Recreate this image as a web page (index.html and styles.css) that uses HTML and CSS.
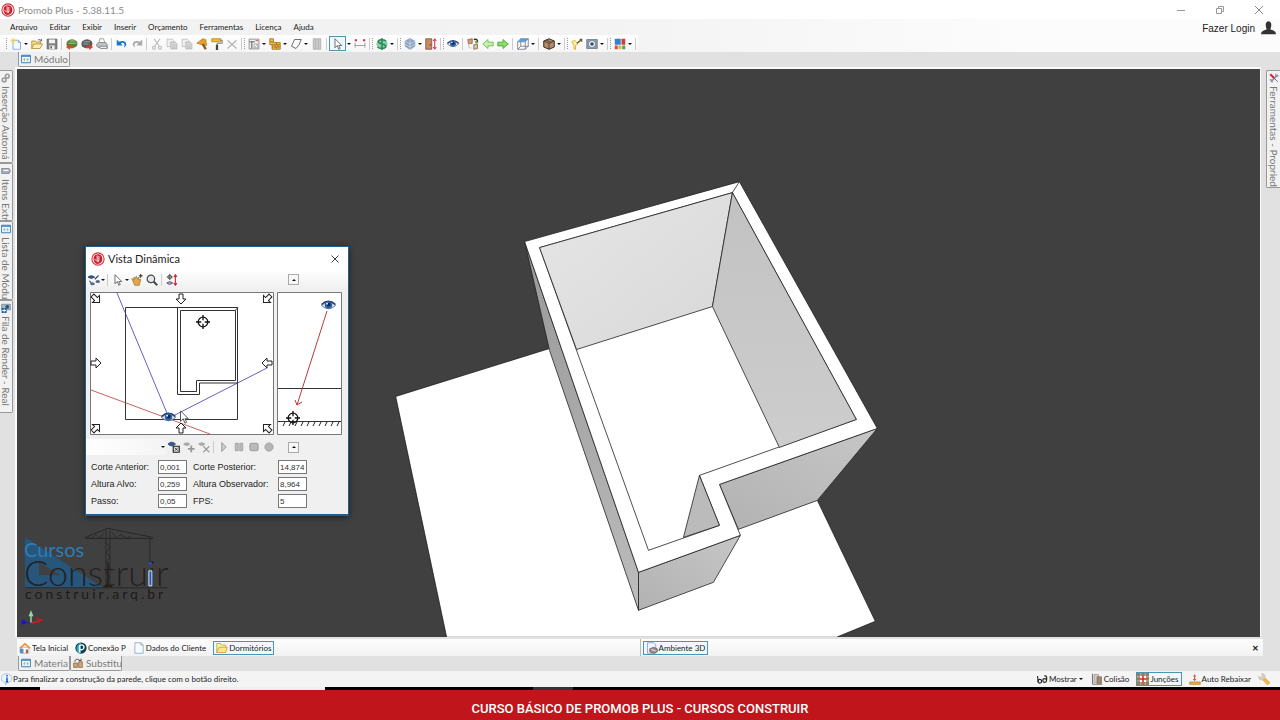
FILE: index.html
```html
<!DOCTYPE html>
<html lang="pt-BR">
<head>
<meta charset="utf-8">
<title>Promob Plus</title>
<link rel="stylesheet" href="styles.css">
</head>
<body>
<svg class="defs" aria-hidden="true">
  <symbol id="logo" viewBox="0 0 16 16"><circle cx="8" cy="8" r="7" fill="#fff" stroke="#d3303a" stroke-width="1.2"/><path d="M8 2.500C4 2.500 2.500 6 3 9s3 5 5 4.500c2.500 0 5-2 5-5.500 0-3.500-2-5.500-5-5.500z" fill="#cf1f2b"/><path d="M7 4v5l2 1V4.500M4 8q2 3 5 3" fill="none" stroke="#fff" stroke-width="1"/></symbol>
  <symbol id="new" viewBox="0 0 16 16"><path d="M4 3h7l3 3v9H4z" fill="#f5faff" stroke="#6c9bd0"/><path d="M11 3v3h3" fill="none" stroke="#6c9bd0"/><path d="M4 0v7M.5 3.500h7M1.500 1l5 5M6.500 1l-5 5" stroke="#f2cf4a"/></symbol>
  <symbol id="open" viewBox="0 0 16 16"><path d="M1 14V4h5l1 1.500h6V8" fill="#f6dc8b" stroke="#a98325"/><path d="M1 14L4 8h11.500L12 14z" fill="#fff0b0" stroke="#a98325"/><path d="M9 3c2-2 4-1 5 1m0-3v3h-3" fill="none" stroke="#555"/></symbol>
  <symbol id="save" viewBox="0 0 16 16"><path d="M1.500 1.500h13v13h-13z" fill="#858585" stroke="#555"/><path d="M4 2h8v5H4zM4.500 10h7v4.500h-7z" fill="#f2f2f2"/><path d="M6 11h2v3H6z" fill="#555"/></symbol>
  <symbol id="imp" viewBox="0 0 16 16"><path d="M2 4q6-5 12 0 3 5-1 8-6 3-11 0-3-4 0-8z" fill="#51803c"/><path d="M3 7h11M5 4h7" stroke="#a6c97b" stroke-width="1.500"/><path d="M0 12l5-4v2.500h5v3H5V16z" fill="#d94926"/></symbol>
  <symbol id="exp" viewBox="0 0 16 16"><path d="M2 4q6-5 12 0 3 5-1 8-6 3-11 0-3-4 0-8z" fill="#5c5c5c"/><path d="M4 5h8M3 8h7" stroke="#a2a2a2" stroke-width="1.500"/><path d="M16 12l-5-4v2.500H7v3h4V16z" fill="#d13e2b"/></symbol>
  <symbol id="print" viewBox="0 0 16 16"><path d="M4 7l1-6h5l2 6" fill="#fff" stroke="#888"/><path d="M1 8l3-2h9l2 3v4H4l-3-2z" fill="#bfc3ca" stroke="#777"/><path d="M4 11h10l1 3H6z" fill="#e8edf2" stroke="#777"/></symbol>
  <symbol id="undo" viewBox="0 0 16 16"><path d="M1 2v8h8L6.500 7.500C9 5 13 7 10.500 13 17 9 13 1 4 5z" fill="#1878c9"/></symbol>
  <symbol id="redo" viewBox="0 0 16 16"><path d="M15 2v8H7l2.500-2.500C7 5 3 7 5.500 13-1 9 3 1 12 5z" fill="#aaa"/></symbol>
  <symbol id="cut" viewBox="0 0 16 16"><path d="M4 1l7 10M12 1L5 11" stroke="#bbb" stroke-width="1.500"/><g fill="none" stroke="#bbb" stroke-width="1.500"><circle cx="4" cy="13" r="2"/><circle cx="12" cy="13" r="2"/></g></symbol>
  <symbol id="copy" viewBox="0 0 16 16"><path d="M1.500 1.500h7l2 2v8h-9z" fill="#eee" stroke="#bbb"/><path d="M6.500 5.500h6l2 2v7h-8z" fill="#ddd" stroke="#aaa"/><path d="M8 9h5M8 11h5M8 13h5" stroke="#bbb"/></symbol>
  <symbol id="brush" viewBox="0 0 16 16"><path d="M1 7l8-6 4 1 1 8-5-1z" fill="#e4a12f" stroke="#b97913"/><path d="M9 8l4 7" stroke="#7d5923" stroke-width="3"/></symbol>
  <symbol id="roll" viewBox="0 0 16 16"><path d="M1 1h12v4H1z" fill="#f0c032" stroke="#a77a15"/><path d="M13 3h2v4H8v3" fill="none" stroke="#555"/><path d="M6.500 9h3v7h-3z" fill="#444"/></symbol>
  <symbol id="del" viewBox="0 0 16 16"><path d="M2 3l12 11M14 3L2 14" stroke="#b8b8b8" stroke-width="1.700"/></symbol>
  <symbol id="plan" viewBox="0 0 16 16"><path d="M1.500 1.500h13v13h-13z" fill="#f2f2f2" stroke="#777"/><path d="M2 5h7M5 5v9" stroke="#888" stroke-width="2"/><path d="M8 8h5v5H8zM8 13l5-5" fill="#fff" stroke="#999"/><path d="M10 3.500h4" stroke="#d66" stroke-width="1.500"/></symbol>
  <symbol id="bricks" viewBox="0 0 16 16"><path d="M1 1h5v5h9v9H4V9H1z" fill="#edb847" stroke="#9a6c20"/><path d="M1 5h5M4 9h11M4 12h11M10 6v3M8 9v3M12 9v3M10 12v3" stroke="#9a6c20"/></symbol>
  <symbol id="poly" viewBox="0 0 16 16"><path d="M6 2h9l-3 7-4 5-6-3z" fill="#fafafa" stroke="#444"/></symbol>
  <symbol id="book" viewBox="0 0 16 16"><path d="M3 1h10v14H3z" fill="#c9c9c9" stroke="#aaa"/><path d="M6 1v14M10 1v14" stroke="#b1b1b1"/></symbol>
  <symbol id="cursor" viewBox="0 0 16 16"><path d="M4 1v12l3-3 2 5 2-1-2-4h4z" fill="#fff" stroke="#444"/></symbol>
  <symbol id="measure" viewBox="0 0 16 16"><path d="M1.500 6v7M14.500 6v7M1 10h14" stroke="#888"/><path d="M1 3h3M12 3h3" stroke="#b33a51" stroke-width="2.500"/></symbol>
  <symbol id="money" viewBox="0 0 16 16"><ellipse cx="8" cy="8" rx="7.500" ry="6.500" fill="#8ccba5"/><path d="M13.500 4C9 1 3 2 3 5s10 2.500 10 6-8 4-11 1M8 0v16" fill="none" stroke="#258a57" stroke-width="2"/></symbol>
  <symbol id="layers" viewBox="0 0 16 16"><path d="M8 0l7 4v7l-7 5-7-5V4z" fill="#8aa3c2"/><path d="M1 4l7 4 7-4M1 8l7 4 7-4M8 1v15" fill="none" stroke="#d4dfec"/></symbol>
  <symbol id="door" viewBox="0 0 16 16"><path d="M1 1h8v14H1z" fill="#c48a65" stroke="#754a34"/><path d="M7 8v2" stroke="#422"/><path d="M13 2v12M11 4l2-3 2 3M11 12l2 3 2-3" fill="none" stroke="#d11c42" stroke-width="1.300"/></symbol>
  <symbol id="eye" viewBox="0 0 16 16"><path d="M.5 8Q8 .5 15.500 8 8 15 .5 8z" fill="#dce6f3" stroke="#6a7890"/><path d="M.5 7Q8 0 15.500 7" fill="none" stroke="#253b67" stroke-width="1.500"/><circle cx="8" cy="7.500" r="4" fill="#2b63ae"/><circle cx="8" cy="7" r="2" fill="#13274d"/><circle cx="6.500" cy="6" r="1" fill="#fff"/></symbol>
  <symbol id="swap" viewBox="0 0 16 16"><path d="M1 2l6-1v6L2 8z" fill="#d49a72" stroke="#876042"/><path d="M9 9l5-1v6l-5 1z" fill="#d8c0a0" stroke="#876042"/><path d="M9 2c4-1 5 0 5 4" fill="none" stroke="#333" stroke-width="2"/><path d="M6 13c-3 1-4-1-4-4" fill="none" stroke="#ccc" stroke-width="1.500"/><path d="M10 4l5 1-3 3z" fill="#64a24b"/></symbol>
  <symbol id="left" viewBox="0 0 16 16"><path d="M1 8l7-6v3.500h7v5H8V14z" fill="#c9efa8" stroke="#5fb441"/></symbol>
  <symbol id="right" viewBox="0 0 16 16"><path d="M15 8L8 2v3.500H1v5h7V14z" fill="#8ade66" stroke="#3b9c2b"/></symbol>
  <symbol id="wire" viewBox="0 0 16 16"><path d="M1 5l4-4h10v10l-4 4H1z" fill="#fff" stroke="#667"/><path d="M1 5h10v10M11 5l4-4M5 1v10M5 11h10M1 15l4-4" fill="none" stroke="#667"/><path d="M1 5l4-4h10l-4 4z" fill="#5a9ee0"/></symbol>
  <symbol id="cube" viewBox="0 0 16 16"><path d="M8 1l7 3v8l-7 3-7-3V4z" fill="#b48b68" stroke="#3a2b22" stroke-width="1.300"/><path d="M1 4l7 3 7-3M8 7v8M4 2.500L11 6" fill="none" stroke="#3a2b22"/></symbol>
  <symbol id="lamp" viewBox="0 0 16 16"><path d="M1 5l4-2 4 5-3 2v5H4v-5z" fill="#fff1a0" stroke="#d5a018"/><path d="M8 7l5-4" stroke="#6b4a1c" stroke-width="2"/><path d="M11 1h4v5z" fill="#6b4a1c"/></symbol>
  <symbol id="camera" viewBox="0 0 16 16"><path d="M1 2h14v12H1z" fill="#8799a8" stroke="#647786"/><circle cx="8" cy="8" r="4" fill="#e6edf2"/><circle cx="8" cy="8" r="2.300" fill="#384e60"/></symbol>
  <symbol id="grid" viewBox="0 0 16 16"><path d="M1 1h8v8H1z" fill="#367fd1"/><path d="M10 1h5v8h-5z" fill="#cf3e35"/><path d="M1 10h4v5H1z" fill="#d84b3e"/><path d="M6 10h4v5H6z" fill="#e5b631"/><path d="M11 10h4v5h-4z" fill="#4fa65a"/></symbol>
  <symbol id="table" viewBox="0 0 16 16"><path d="M1 2h14v12H1z" fill="#fff" stroke="#397fbe" stroke-width="1.600"/><path d="M1 3.500h14" stroke="#397fbe" stroke-width="2"/><path d="M4 7h3v2H4zM9 7h3v2H9zM4 10.500h3v1H4zM9 10.500h3v1H9z" fill="#67a38b"/></symbol>
  <symbol id="gears" viewBox="0 0 16 16"><g fill="none" stroke="#999" stroke-width="2.500"><circle cx="10" cy="5" r="3"/><circle cx="5" cy="11" r="3"/></g></symbol>
  <symbol id="drawer" viewBox="0 0 16 16"><path d="M1 4h12l2 4-2 4H1z" fill="#a6abb9" stroke="#666d80"/><path d="M4 7h8" stroke="#fff" stroke-width="2"/></symbol>
  <symbol id="queue" viewBox="0 0 16 16"><path d="M1 2h14v9H1z" fill="#a3b8c7" stroke="#647a8a"/><circle cx="10" cy="6" r="3" fill="#344e66"/><path d="M1 8h8v8H1z" fill="#245fa6"/><path d="M5 9v6M2 12h6" stroke="#fff" stroke-width="1.500"/></symbol>
  <symbol id="tools" viewBox="0 0 16 16"><path d="M3 14L14 3" stroke="#8994a8" stroke-width="2.500"/><path d="M2 2l6 6" stroke="#d31b35" stroke-width="3"/><path d="M8 8l6 6" stroke="#666" stroke-width="1.500"/><path d="M11 1v4h4M1 11h4v4" fill="none" stroke="#8994a8" stroke-width="2"/></symbol>
  <symbol id="home" viewBox="0 0 16 16"><path d="M3 7h10v8H3z" fill="#fff" stroke="#aaa"/><path d="M0 8l8-7 8 7-2 1-6-5-6 5z" fill="#ed9432"/><path d="M1 9h5v6H1z" fill="#598dc6"/><path d="M9 10h3v5H9z" fill="#a66e3d"/></symbol>
  <symbol id="connect" viewBox="0 0 16 16"><circle cx="8" cy="8" r="7.500" fill="#163c4d"/><path d="M3 13C0 6 5 1 8 1v14C6 15 4 15 3 13z" fill="#24aab9"/><path d="M6 14V6c0-3 6-3 6 1s-5 4-5 2" fill="none" stroke="#fff" stroke-width="1.800"/></symbol>
  <symbol id="page" viewBox="0 0 16 16"><path d="M2.500 1h8l3 3v11h-11z" fill="#f8fbff" stroke="#769fce"/><path d="M10.500 1v3h3" fill="none" stroke="#769fce"/></symbol>
  <symbol id="folder" viewBox="0 0 16 16"><path d="M1 14V2h5l1 2h6v3" fill="#fff0ab" stroke="#c19a31"/><path d="M1 14l3-7h11l-2 7z" fill="#ffe583" stroke="#c19a31"/></symbol>
  <symbol id="replace" viewBox="0 0 16 16"><path d="M1 8h6v7H1zM9 6h6v9H9z" fill="#d3a673" stroke="#755436"/><path d="M3 6c0-5 6-5 8-2M9 4h4V1" fill="none" stroke="#444" stroke-width="1.500"/></symbol>
  <symbol id="scene" viewBox="0 0 16 16"><path d="M2 1h8l3 3v11H2z" fill="#f1f5fa" stroke="#7c93b6"/><path d="M5 9l5-2 5 2v4l-5 2-5-2z" fill="#9c8b86" stroke="#566"/><path d="M7 10l6 2" stroke="#d8dfe8" stroke-width="1.500"/></symbol>
  <symbol id="info" viewBox="0 0 16 16"><path d="M8 1a6.500 6 0 110 12l-2 3v-3A6.500 6 0 018 1z" fill="#eaf4ff" stroke="#9cb5d4"/><path d="M8 6v5M6.500 11.500h3M8 2.500v2" stroke="#1559b8" stroke-width="2"/></symbol>
  <symbol id="show" viewBox="0 0 16 16"><path d="M2 4l1 8M11 4c3-1 4 2 3 6" fill="none" stroke="#222" stroke-width="1.500"/><circle cx="5" cy="11" r="2.500" fill="none" stroke="#222" stroke-width="1.500"/><circle cx="11.500" cy="10" r="2.500" fill="none" stroke="#222" stroke-width="1.500"/></symbol>
  <symbol id="collide" viewBox="0 0 16 16"><path d="M2 1v14M2 15h13" stroke="#777" stroke-width="1.500"/><path d="M4 2h6v11H4z" fill="#cfc8c2" stroke="#999"/><path d="M8 5h6v9H8z" fill="#a2866f" stroke="#857565"/></symbol>
  <symbol id="joint" viewBox="0 0 16 16"><path d="M0 0h16v16H0z" fill="#9b7860"/><path d="M0 5h16M0 10.500h16M5 0v16M11 0v16" stroke="#ddc9b4"/><path d="M4 4h8v8H4z" fill="#fff"/><path d="M8 4v8M4 8h8" stroke="#da2424" stroke-width="2"/></symbol>
  <symbol id="lower" viewBox="0 0 16 16"><path d="M1 12h14v3H1z" fill="#f2ba42" stroke="#a8761c"/><path d="M7.500 2v8M5.500 8l2 2 2-2M6 4h3" fill="none" stroke="#d0463f" stroke-width="1.300"/></symbol>
  <symbol id="wrench" viewBox="0 0 16 16"><path d="M1 5l3 1 2-2-1-3c4 0 5 3 4 5l6 6c1 2-1 4-3 3L6 9C3 10 1 8 1 5z" fill="#f0b846" stroke="#b48739" stroke-width=".6"/><path d="M1 5l3 1 2-2-1-3c4 0 5 3 4 5L6 9C3 10 1 8 1 5z" fill="#ccd0d5"/></symbol>
  <symbol id="eyes" viewBox="0 0 16 16"><path d="M0 4Q4 0 9 4 4 8 0 4z" fill="#315e9d" stroke="#234" stroke-width=".8"/><path d="M2 9l3 4M9 7l5-5" fill="none" stroke="#345" stroke-width="1.500"/><ellipse cx="6" cy="13" rx="3" ry="2" fill="#556a86"/><ellipse cx="13" cy="10" rx="3" ry="2" fill="#556a86"/></symbol>
  <symbol id="hand" viewBox="0 0 16 16"><path d="M1 6l3 2V4l2 2 1-3 1 3 3-2-1 4 3-1-2 8H5z" fill="#e2a84a" stroke="#9b7336"/><path d="M13 0v5M10.500 2.500h5" stroke="#222" stroke-width="1.300"/></symbol>
  <symbol id="mag" viewBox="0 0 16 16"><circle cx="6.500" cy="6.500" r="5" fill="#e2e8ee" stroke="#4b4b4b" stroke-width="1.600"/><path d="M10 10l5 5" stroke="#444" stroke-width="2.500"/></symbol>
  <symbol id="levels" viewBox="0 0 16 16"><path d="M12.500 2v12M10.500 4l2-3 2 3M10.500 12l2 3 2-3" fill="none" stroke="#d1262e" stroke-width="1.500"/><circle cx="5" cy="4" r="2.500" fill="none" stroke="#333"/><path d="M5 0v8M1 4h8" stroke="#333"/><path d="M1 12q4-4 8 0-4 4-8 0z" fill="#9fb2cc" stroke="#445"/></symbol>
  <symbol id="eyesave" viewBox="0 0 16 16"><path d="M0 4q5-5 10 0-5 5-10 0z" fill="#315e9d" stroke="#223a5f"/><path d="M7 7h8v8H7z" fill="#ddd" stroke="#222" stroke-width="1.500"/><path d="M9 9l4 4m0-4l-4 4" stroke="#222"/></symbol>
  <symbol id="eyeadd" viewBox="0 0 16 16"><path d="M0 4q5-5 10 0-5 5-10 0z" fill="#aaa"/><path d="M11 6v9M6.500 10.500h9" stroke="#999" stroke-width="2.500"/></symbol>
  <symbol id="eyedel" viewBox="0 0 16 16"><path d="M0 4q5-5 10 0-5 5-10 0z" fill="#aaa"/><path d="M7 7l8 8m0-8l-8 8" stroke="#999" stroke-width="1.500"/></symbol>
  <symbol id="play" viewBox="0 0 16 16"><path d="M5 2l6 6-6 6z" fill="#ccc" stroke="#888"/></symbol>
  <symbol id="pause" viewBox="0 0 16 16"><path d="M3 3h4v10H3zM9 3h4v10H9z" fill="#bbb" stroke="#999"/></symbol>
  <symbol id="stop" viewBox="0 0 16 16"><rect x="2.500" y="3" width="11" height="10" rx="2" fill="#bbb" stroke="#888"/></symbol>
  <symbol id="rec" viewBox="0 0 16 16"><circle cx="8" cy="8" r="5.500" fill="#b5b5b5" stroke="#999"/></symbol>
  <symbol id="user" viewBox="0 0 16 16"><path d="M5 4c0-5 6-5 6 0 0 3-1 4-1 5 4 1 6 2 6 5H0c0-3 2-4 6-5 0-1-1-2-1-5z" fill="#333"/></symbol>
  <symbol id="min" viewBox="0 0 16 16"><path d="M4 8.500h8" stroke="#999"/></symbol>
  <symbol id="max" viewBox="0 0 16 16"><path d="M4.500 6.500h5v5h-5zM6.500 6.500v-2h5v5h-2" fill="none" stroke="#999"/></symbol>
  <symbol id="close" viewBox="0 0 16 16"><path d="M4 4l8 8M12 4l-8 8" stroke="currentColor"/></symbol>
  <symbol id="arrow" viewBox="0 0 12 12"><path d="M4 1h4v5h3l-5 5-5-5h3z" fill="#fff" stroke="#222"/></symbol>
  <symbol id="target" viewBox="0 0 16 16"><circle cx="8" cy="8" r="5.500" fill="none" stroke="#111" stroke-width="1.500"/><path d="M8 0v6M8 10v6M0 8h6M10 8h6" stroke="#111" stroke-width="1.500"/></symbol>
</svg>

<div class="app">
  <header class="titlebar">
    <svg class="app-logo"><use href="#logo"/></svg>
    <h1 class="title">Promob Plus - 5.38.11.5</h1>
    <div class="window-buttons">
      <button aria-label="Minimizar"><svg><use href="#min"/></svg></button>
      <button aria-label="Restaurar"><svg><use href="#max"/></svg></button>
      <button aria-label="Fechar"><svg><use href="#close"/></svg></button>
    </div>
  </header>

  <div class="top">
    <div class="top-main">
      <nav class="menu">
        <button>Arquivo</button><button>Editar</button><button>Exibir</button><button>Inserir</button><button>Orçamento</button><button>Ferramentas</button><button>Licença</button><button>Ajuda</button>
      </nav>
      <div class="toolbar">
        <i class="grip"></i><button aria-label="Novo"><svg><use href="#new"/></svg></button><i class="caret"></i><button aria-label="Abrir"><svg><use href="#open"/></svg></button><button aria-label="Salvar"><svg><use href="#save"/></svg></button><i class="sep"></i>
        <button aria-label="Importar"><svg><use href="#imp"/></svg></button><button aria-label="Exportar"><svg><use href="#exp"/></svg></button><button aria-label="Imprimir"><svg><use href="#print"/></svg></button><i class="sep"></i>
        <button aria-label="Desfazer"><svg><use href="#undo"/></svg></button><button aria-label="Refazer"><svg><use href="#redo"/></svg></button><i class="sep"></i>
        <button aria-label="Recortar"><svg><use href="#cut"/></svg></button><button aria-label="Copiar"><svg><use href="#copy"/></svg></button><button aria-label="Colar"><svg><use href="#copy"/></svg></button><button aria-label="Pincel"><svg><use href="#brush"/></svg></button><button aria-label="Pintar"><svg><use href="#roll"/></svg></button><button aria-label="Excluir"><svg><use href="#del"/></svg></button><i class="sep"></i>
        <i class="grip"></i><button aria-label="Planta"><svg><use href="#plan"/></svg></button><i class="caret"></i><button aria-label="Paredes"><svg><use href="#bricks"/></svg></button><i class="caret"></i><button aria-label="Polígono"><svg><use href="#poly"/></svg></button><i class="caret"></i><button aria-label="Catálogo"><svg><use href="#book"/></svg></button><i class="sep"></i>
        <button class="active" aria-label="Selecionar"><svg><use href="#cursor"/></svg></button><i class="caret"></i><button aria-label="Medir"><svg><use href="#measure"/></svg></button><i class="sep"></i>
        <i class="grip"></i><button aria-label="Preço"><svg><use href="#money"/></svg></button><i class="caret"></i><i class="sep"></i>
        <i class="grip"></i><button aria-label="Camadas"><svg><use href="#layers"/></svg></button><i class="caret"></i><button aria-label="Portas"><svg><use href="#door"/></svg></button><i class="sep"></i>
        <i class="grip"></i><button aria-label="Visualizar"><svg><use href="#eye"/></svg></button><i class="sep"></i>
        <button aria-label="Trocar"><svg><use href="#swap"/></svg></button><button aria-label="Anterior"><svg><use href="#left"/></svg></button><button aria-label="Próximo"><svg><use href="#right"/></svg></button><i class="sep"></i>
        <button aria-label="Aramado"><svg><use href="#wire"/></svg></button><i class="caret"></i><i class="sep"></i><button aria-label="Sólido"><svg><use href="#cube"/></svg></button><i class="caret"></i><i class="sep"></i>
        <i class="grip"></i><button aria-label="Luz"><svg><use href="#lamp"/></svg></button><button aria-label="Câmera"><svg><use href="#camera"/></svg></button><i class="caret"></i><i class="sep"></i>
        <i class="grip"></i><button aria-label="Janelas"><svg><use href="#grid"/></svg></button><i class="caret"></i><i class="sep"></i>
      </div>
    </div>
    <button class="login">Fazer Login <svg><use href="#user"/></svg></button>
  </div>

  <div class="panel-tabs"><button class="ptab"><svg><use href="#table"/></svg><span>Módulo</span></button></div>

  <main class="work">
    <aside class="rail">
      <button class="vtab vtab-a"><svg><use href="#gears"/></svg><span>Inserção Automá</span></button>
      <button class="vtab vtab-b"><svg><use href="#drawer"/></svg><span>Itens Extr</span></button>
      <button class="vtab vtab-c"><svg><use href="#table"/></svg><span>Lista de Módu</span></button>
      <button class="vtab vtab-d"><svg><use href="#queue"/></svg><span>Fila de Render - Real</span></button>
    </aside>

    <section class="viewport">
      <svg class="model" viewBox="17 69 1244 567" preserveAspectRatio="xMidYMid meet" aria-label="Ambiente 3D">
        <defs>
          <linearGradient id="g1" x1="0" y1="0" x2="1" y2="1"><stop offset="0" stop-color="#e6e6e6"/><stop offset="1" stop-color="#d8d8d8"/></linearGradient>
          <linearGradient id="g2" x1="0" y1="0" x2="0" y2="1"><stop offset="0" stop-color="#c2c2c2"/><stop offset="1" stop-color="#cdcdcd"/></linearGradient>
          <linearGradient id="g3" x1="1" y1="0" x2="0" y2="1"><stop offset="0" stop-color="#c6c6c6"/><stop offset="1" stop-color="#b2b2b2"/></linearGradient>
          <linearGradient id="g4" x1="0" y1="0" x2="0" y2="1"><stop offset="0" stop-color="#999"/><stop offset=".5" stop-color="#a9a9a9"/><stop offset="1" stop-color="#bdbdbd"/></linearGradient>
        </defs>
        <path d="M396 396L550 348l150-38 118 190 58 121-39 16H447z" fill="#fff" stroke="#111" stroke-width=".7"/>
        <g stroke="#222" stroke-width=".8" stroke-linejoin="round">
          <path d="M525 241l25 109 89 260v-38z" fill="url(#g4)"/>
          <path d="M639 572l102-37-27 47-75 28z" fill="url(#g3)"/>
          <path d="M720 484l158-56-60 72-79 29z" fill="url(#g3)"/>
          <path d="M525 241l215-60 138 247-158 56 21 51-102 37z" fill="#fff"/>
          <path d="M540 247l193-55 124 227-157 56 20 50-71 25z" fill="#fff"/>
          <path d="M540 247l193-55-20 114-136 43z" fill="url(#g1)"/>
          <path d="M733 192l124 227-77 28-67-141z" fill="url(#g2)"/>
          <path d="M700 475l20 50-36 12z" fill="#bbb"/>
          <path d="M740 181l-7 11" fill="none"/>
        </g>
        <g class="brand">
          <path d="M25 537l79 51H25z" fill="#27567b"/><path d="M39 562v13h22z" fill="#404040"/>
          <g fill="none" stroke="#292526">
            <path d="M85 538h68M108 528l-23 9M108 528l45 9" stroke-width="1"/>
            <path d="M106 530v56M110 530v56M106 542l4 5-4 5 4 5-4 5 4 5-4 5 4 5-4 5M88 536l4 2 4-4 4 4 4-6M112 532l4 6 5-4 5 4 5-2" stroke-width=".8"/>
            <path d="M150 538v24"/><path d="M25 587.500h143"/>
          </g>
          <path d="M103 587q5-7 10 0z" fill="#252122"/>
          <text x="24" y="557" class="brand-top">Cursos</text>
          <text x="24" y="586" class="brand-main">Construir</text>
          <text x="25" y="599" class="brand-site">construir.arq.br</text>
          <circle cx="150.500" cy="563" r="1.500" fill="#234bd6"/><path d="M149 570.500h3v15h-3z" fill="#1557c8" stroke="#e6e6e6"/>
        </g>
        <path d="M31 623v-9" stroke="#9ed59e" stroke-width="1.500"/><path d="M28.500 616l2.500-6 2.500 6z" fill="#9ed59e"/>
        <path d="M31 623l7-2" stroke="#c22" stroke-width="1.500"/><path d="M37 618l7 1-6 4z" fill="#c81818"/>
        <path d="M31 623l-6-1" stroke="#1a1ad0"/><circle cx="23.500" cy="622" r="2.300" fill="#1515c8"/>
      </svg>
    </section>

    <aside class="rail rail-right"><button class="vtab vtab-r"><svg><use href="#tools"/></svg><span>Ferramentas - Propried</span></button></aside>

    <section class="dialog" role="dialog" aria-label="Vista Dinâmica">
      <div class="dlg-title"><svg><use href="#logo"/></svg><h2>Vista Dinâmica</h2><button aria-label="Fechar"><svg><use href="#close"/></svg></button></div>
      <div class="dlg-tools">
        <button aria-label="Vistas"><svg><use href="#eyes"/></svg></button><i class="caret"></i><i class="sep"></i>
        <button aria-label="Selecionar"><svg><use href="#cursor"/></svg></button><i class="caret"></i><button aria-label="Mover"><svg><use href="#hand"/></svg></button><button aria-label="Zoom"><svg><use href="#mag"/></svg></button><i class="sep"></i><button aria-label="Alturas"><svg><use href="#levels"/></svg></button>
        <div class="fold-slot"><button class="fold" aria-label="Recolher"></button></div>
      </div>
      <div class="views">
        <svg viewBox="90 292 184 143">
          <path d="M90.500 292.500h183v142h-183z" fill="#fff" stroke="#777"/>
          <g fill="none" stroke="#333"><path d="M125.500 307.500h112v112h-112zM177.500 307.500v87h22v-11.500h38M180.500 391.500v-81h55v70h-39v11zM235 310.500l3-3"/></g>
          <path d="M117 293l52 125 98-50" fill="none" stroke="#3b3ba8" stroke-width=".8"/><path d="M91 390l119 44" stroke="#b83a3a" stroke-width=".8"/>
          <use href="#arrow" x="175" y="293" width="12" height="12"/>
          <use href="#arrow" x="175" y="422" width="12" height="12" transform="rotate(180 181 428)"/>
          <use href="#arrow" x="90" y="357" width="12" height="12" transform="rotate(-90 96 363)"/>
          <use href="#arrow" x="261" y="357" width="12" height="12" transform="rotate(90 267 363)"/>
          <use href="#arrow" x="90" y="293" width="12" height="12" transform="rotate(-45 96 299)"/>
          <use href="#arrow" x="261" y="293" width="12" height="12" transform="rotate(45 267 299)"/>
          <use href="#arrow" x="90" y="422" width="12" height="12" transform="rotate(-135 96 428)"/>
          <use href="#arrow" x="261" y="422" width="12" height="12" transform="rotate(135 267 428)"/>
          <use href="#target" x="196" y="315" width="14" height="14"/>
          <use href="#eye" x="161" y="410" width="15" height="15"/>
          <use href="#cursor" x="177" y="410" width="14" height="14"/>
        </svg>
        <svg viewBox="277 292 65 143">
          <path d="M277.500 292.500h64v142h-64z" fill="#fff" stroke="#777"/>
          <path d="M278 388.500h63M278 421.500h63" stroke="#333"/>
          <path d="M283 426l2-4m4 4l2-4m4 4l2-4m4 4l2-4m4 4l2-4m4 4l2-4m4 4l2-4m4 4l2-4m4 4l2-4m4 4l2-4" stroke="#222"/>
          <path d="M327 311l-30 94M295 400l2 5 5-3" fill="none" stroke="#b83a3a"/>
          <use href="#target" x="286" y="411" width="14" height="14"/>
          <use href="#eye" x="321" y="298" width="15" height="15"/>
        </svg>
      </div>
      <div class="dlg-play">
        <button class="combo" aria-label="Câmeras salvas"><i class="caret"></i></button>
        <button aria-label="Salvar vista"><svg><use href="#eyesave"/></svg></button><button aria-label="Adicionar vista"><svg><use href="#eyeadd"/></svg></button><button aria-label="Remover vista"><svg><use href="#eyedel"/></svg></button><i class="sep"></i>
        <button aria-label="Reproduzir"><svg><use href="#play"/></svg></button><button aria-label="Pausar"><svg><use href="#pause"/></svg></button><button aria-label="Parar"><svg><use href="#stop"/></svg></button><button aria-label="Gravar"><svg><use href="#rec"/></svg></button>
        <div class="fold-slot"><button class="fold" aria-label="Recolher"></button></div>
      </div>
      <form class="fields">
        <label for="f1">Corte Anterior:</label><input id="f1" value="0,001"><label for="f2">Corte Posterior:</label><input id="f2" value="14,874">
        <label for="f3">Altura Alvo:</label><input id="f3" value="0,259"><label for="f4">Altura Observador:</label><input id="f4" value="8,964">
        <label for="f5">Passo:</label><input id="f5" value="0,05"><label for="f6">FPS:</label><input id="f6" value="5">
      </form>
    </section>
  </main>

  <div class="docs">
    <div class="docs-half">
      <button><svg><use href="#home"/></svg>Tela Inicial</button><button><svg><use href="#connect"/></svg>Conexão P</button><button><svg><use href="#page"/></svg>Dados do Cliente</button><button class="active"><svg><use href="#folder"/></svg>Dormitórios</button>
    </div>
    <div class="docs-half docs-env">
      <button class="active"><svg><use href="#scene"/></svg>Ambiente 3D</button><button class="docs-close" aria-label="Fechar ambiente">✕</button>
    </div>
  </div>

  <div class="panel-tabs"><button class="ptab"><svg><use href="#table"/></svg><span>Materia</span></button><button class="ptab"><svg><use href="#replace"/></svg><span>Substitu</span></button></div>

  <div class="status">
    <svg><use href="#info"/></svg><p>Para finalizar a construção da parede, clique com o botão direito.</p>
    <div class="status-tools">
      <button><svg><use href="#show"/></svg>Mostrar<i class="caret"></i></button><button><svg><use href="#collide"/></svg>Colisão</button><button class="active"><svg><use href="#joint"/></svg>Junções</button><button><svg><use href="#lower"/></svg>Auto Rebaixar</button><button aria-label="Configurar"><svg><use href="#wrench"/></svg></button>
    </div>
  </div>
  <div class="edge"><i class="edge-light"></i><i class="edge-dim"></i></div>
  <footer class="caption">CURSO BÁSICO DE PROMOB PLUS - CURSOS CONSTRUIR</footer>
</div>
</body>
</html>
```
FILE: styles.css
```css
* { box-sizing: border-box; }
body { margin: 0; font-family: Lato, "Open Sans", sans-serif; font-size: 8px; color: #222; }
button { border: 0; padding: 0; margin: 0; background: none; font: inherit; color: inherit; display: flex; align-items: center; justify-content: center; white-space: nowrap; }
h1, h2, p { margin: 0; font-weight: 400; }
svg { display: block; flex: none; width: 12px; height: 12px; }
.defs { position: absolute; width: 0; height: 0; }

.app { min-height: 100vh; display: flex; flex-direction: column; background: #e1e1e1; }

.titlebar { height: 19px; display: flex; align-items: center; padding: 0 1px; gap: 3px; background: #fff; }
.titlebar .app-logo { width: 14px; height: 14px; }
.titlebar .title { font-size: 10px; color: #8c8c8c; flex: 1; }
.window-buttons { display: flex; gap: 23px; padding-right: 12px; color: #888; }
.window-buttons svg { width: 16px; height: 16px; }

.top { display: flex; background: #fcfcfc; }
.top-main { flex: 1; background: linear-gradient(90deg, #f1f1f1, #f3f3f3 50%, #fcfcfc 85%); }
.menu { height: 16px; display: flex; align-items: center; gap: 12px; padding-left: 10px; }
.toolbar { height: 17px; display: flex; align-items: center; padding-left: 6px; width: max-content; background: linear-gradient(#fefefe, #f6f6f6); }
.toolbar button { width: 15px; height: 15px; }
.toolbar .active { width: 17px; }
.active { border: 1px solid #4c93b5; background: #f0f8fc; }
.grip { width: 2px; height: 11px; border-left: 1px dotted #999; }
.sep { width: 5px; height: 12px; background: linear-gradient(90deg, transparent 2px, #ccc 2px, #ccc 3px, transparent 3px); }
.caret { width: 6px; height: 2px; display: flex; justify-content: center; }
.caret::after { content: ""; border: 2px solid transparent; border-top-color: #111; }
.login { font-family: "Liberation Sans", Arial, sans-serif; font-size: 10px; gap: 6px; padding: 0 4px 16px 0; align-self: flex-end; }
.login svg { width: 15px; height: 15px; }

.panel-tabs { height: 15px; display: flex; padding-left: 18px; background: #e1e1e1; }
.ptab { width: 52px; height: 15px; gap: 3px; padding-left: 2px; justify-content: flex-start; border: 1px solid #999; border-top: 0; border-radius: 0 0 2px 2px; background: #f0f0f0; font-size: 10px; color: #7a7a7a; }
.ptab svg { width: 10px; height: 10px; }

.work { flex: 1; display: flex; position: relative; min-height: 0; padding-bottom: 2px; }
.rail { width: 14px; padding-top: 3px; margin-right: 1px; }
.vtab { width: 13px; writing-mode: vertical-rl; justify-content: flex-start; gap: 3px; padding-top: 2px; border: 1px solid #999; border-left: 0; border-radius: 0 2px 2px 0; background: #f2f2f2; font-size: 10px; line-height: 12px; color: #777; }
.vtab svg { width: 10px; height: 10px; }
.vtab-a { height: 93px; }
.vtab-b { height: 58px; }
.vtab-c { height: 79px; }
.vtab-d { height: 113px; }
.viewport { flex: 1; display: flex; background: #404040; border: solid #fafafa; border-width: 2px 1px 0 2px; overflow: hidden; }
.model { width: 100%; height: 100%; }
.rail-right { margin: 0 0 0 5px; }
.vtab-r { width: 14px; height: 118px; border: 1px solid #999; border-right: 0; border-radius: 2px 0 0 2px; }

.brand-top { font-family: Lato, sans-serif; font-size: 20px; fill: #2c7cb8; }
.brand-main { font-family: Lato, sans-serif; font-weight: 300; font-size: 36px; fill: #242122; }
.brand-site { font-family: Lato, sans-serif; font-size: 14px; letter-spacing: 3px; fill: #1c1a1a; }

.dialog { position: absolute; left: 85px; top: 179px; width: 264px; border: 1px solid #1f5d8f; border-bottom-width: 2px; background: #f0f0f0; box-shadow: 0 1px 6px #0008; }
.dlg-title { height: 23px; display: flex; align-items: center; gap: 3px; padding: 0 6px 0 5px; background: #fff; }
.dlg-title svg { width: 14px; height: 14px; }
.dlg-title h2 { flex: 1; font-size: 11px; }
.dlg-tools, .dlg-play { display: flex; align-items: center; }
.dlg-tools button, .dlg-play button { width: 15px; }
.dlg-tools { height: 19px; background: linear-gradient(#fff, #f0f0f0); }
.dlg-tools .caret { width: 4px; }
.dlg-play { height: 24px; }
.dlg-play .combo { width: 80px; height: 16px; justify-content: flex-end; background: linear-gradient(90deg, #fff, #f4f4f4); }
.fold-slot { flex: 1; display: flex; justify-content: flex-end; padding-right: 49px; }
.fold-slot .fold { width: 11px; height: 11px; border: 1px solid #aaa; background: #f8f8f8; }
.fold::after { content: ""; border: 2px solid transparent; border-top: 0; border-bottom-color: #111; }
.views { display: grid; grid-template-columns: 184fr 65fr; gap: 3px; padding: 3px 6px 0 4px; }
.views svg { width: 100%; height: auto; }
.fields { display: grid; grid-template-columns: 61px 29px 79px 29px; column-gap: 6px; row-gap: 3px; align-items: center; padding: 1px 5px 6px; font-family: "Liberation Sans", Arial, sans-serif; }
.fields label { font-size: 9px; white-space: nowrap; }
.fields input { width: 29px; height: 14px; padding: 0 1px; border: 1px solid #777; background: #fff; font: 8px "Liberation Sans", Arial, sans-serif; color: #333; }

.docs { height: 17px; display: flex; margin: 0 17px; background: linear-gradient(#fdfdfd, #f2f2f2); }
.docs-half { flex: 1; display: flex; align-items: center; gap: 7px; padding-left: 2px; }
.docs button, .status button { gap: 1px; }
.docs .active { height: 14px; padding: 0 2px; }
.docs-env { border-left: 1px solid #bbb; }
.docs-env .docs-close { margin-left: auto; padding-right: 4px; font-weight: 700; }

.status { height: 16px; display: flex; align-items: center; padding: 0 10px 0 1px; background: #f4f4f4; }
.status-tools { margin-left: auto; display: flex; align-items: center; gap: 7px; }
.status-tools .active { height: 14px; padding: 0 2px 0 0; }

.edge { height: 3px; display: flex; background: #000; padding-left: 40px; }
.edge-light { width: 23%; background: #eee; }
.edge-dim { width: 40px; margin-left: 208px; background: #333; }
.caption { height: 30px; display: flex; align-items: center; justify-content: center; padding-top: 6px; background: #c1151c; color: #fff; font: 500 13px Roboto, sans-serif; }
```
